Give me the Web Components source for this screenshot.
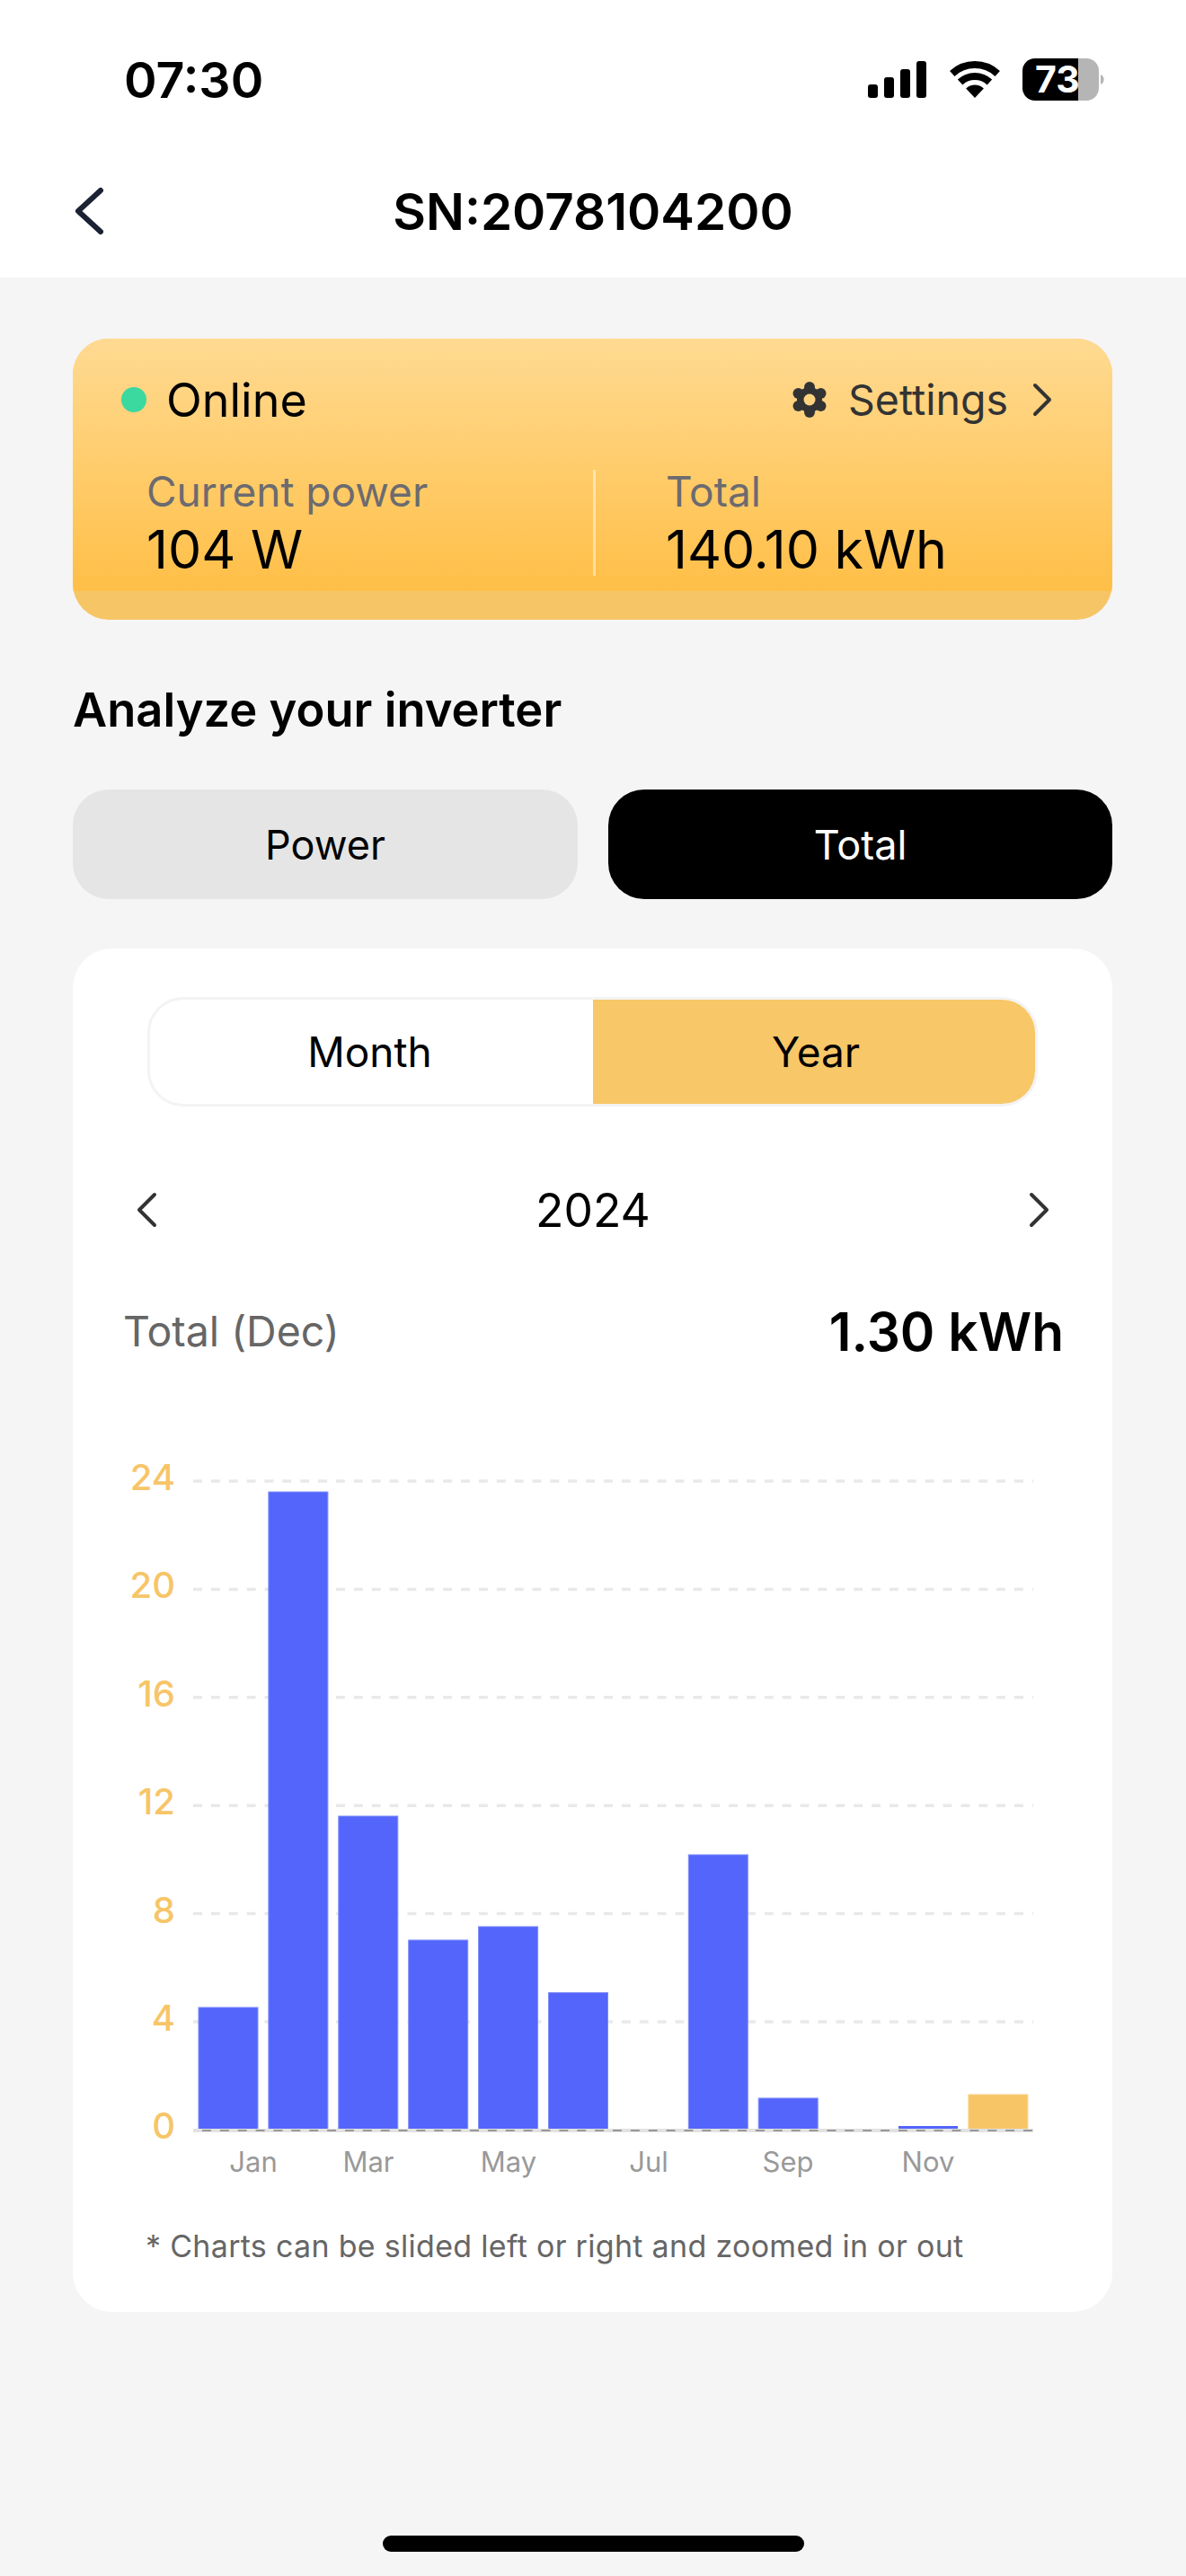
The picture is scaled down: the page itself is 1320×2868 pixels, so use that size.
<!DOCTYPE html>
<html>
<head>
<meta charset="utf-8">
<title>Inverter</title>
<style>
  html, body { margin: 0; padding: 0; background: #f5f5f5; }
  body { width: 1320px; height: 2868px; overflow: hidden; font-family: Inter, "Liberation Sans", sans-serif; color: #000; }
</style>
</head>
<body>
<inverter-page></inverter-page>

<script>
// status bar at the top of the phone
class StatusBar extends HTMLElement {
  constructor() {
    super();
    this.attachShadow({ mode: 'open' }).innerHTML = `
<style>
  :host { display: flex; align-items: center; justify-content: space-between; height: 176px; padding: 0 89px 0 138px; box-sizing: border-box; background: #fff; }
  .time { font-size: 55.5px; font-weight: 600; letter-spacing: 0; }
  .icons { display: flex; align-items: center; }
  svg { display: block; }
  .wifi { margin-left: 26px; }
  .battery { margin-left: 25px; position: relative; width: 93px; height: 47px; }
  .battery span { position: absolute; left: 14px; top: 0; line-height: 47px; font-size: 41px; font-weight: 700; color: #fff; }
</style>
<div class="time">07:30</div>
<div class="icons">
  <svg width="65" height="41" viewBox="0 0 65 41">
    <rect x="0" y="26" width="11" height="15" rx="3"/>
    <rect x="18" y="18" width="11" height="23" rx="3"/>
    <rect x="36" y="9" width="11" height="32" rx="3"/>
    <rect x="54" y="0" width="11" height="41" rx="3"/>
  </svg>
  <svg class="wifi" width="56" height="41" viewBox="0 0 56 41">
    <path d="M2.8 14A37 37 0 0 1 53.2 14M11.6 23.5A24 24 0 0 1 44.4 23.5" fill="none" stroke="#000" stroke-width="8"/>
    <path d="M28 41L18.1 30.4A14.5 14.5 0 0 1 37.9 30.4Z"/>
  </svg>
  <div class="battery">
    <svg width="93" height="47" viewBox="0 0 93 47">
      <path d="M14 0H62V47H14A14 14 0 0 1 0 33V14A14 14 0 0 1 14 0Z"/>
      <path d="M62 0H71A14 14 0 0 1 85 14V33A14 14 0 0 1 71 47H62Z" fill="#b5b5b5"/>
      <path d="M87 18A6 6 0 0 1 87 29Z" fill="#b5b5b5"/>
    </svg>
    <span>73</span>
  </div>
</div>`;
  }
}
customElements.define('status-bar', StatusBar);

class NavBar extends HTMLElement {
  constructor() {
    super();
    this.attachShadow({ mode: 'open' }).innerHTML = `
<style>
  :host { display: flex; align-items: center; justify-content: center; position: relative; height: 119px; padding-bottom: 14px; background: #fff; }
  .title { font-size: 56.5px; font-weight: 600; }
  svg { position: absolute; left: 81px; top: 31px; }
</style>
<svg width="36" height="56" viewBox="0 0 36 56"><path d="M31 5L6 28L31 51" fill="none" stroke="#1a2233" stroke-width="6" stroke-linecap="round" stroke-linejoin="round"/></svg>
<div class="title"><slot></slot></div>`;
  }
}
customElements.define('nav-bar', NavBar);

// the yellow summary card
class InverterCard extends HTMLElement {
  constructor() {
    super();
    this.attachShadow({ mode: 'open' }).innerHTML = `
<style>
  :host { display: block; margin: 68px 82px 0 81px; border-radius: 40px; overflow: hidden; background: #f6c566; padding-bottom: 32px; }
  .top { background: linear-gradient(180deg, #ffda92 0%, #ffbf47 100%); height: 281px; box-sizing: border-box; padding: 37px 66px 0 54px; }
  .head { display: flex; align-items: center; justify-content: space-between; height: 62px; }
  .state { display: flex; align-items: center; gap: 22px; font-size: 52px; }
  .dot { width: 28px; height: 28px; border-radius: 50%; background: #3bd9a0; }
  .settings { display: flex; align-items: center; font-size: 46.5px; color: #333; }
  .settings span { margin: 0 26px 0 24px; }
  .stats { display: grid; grid-template-columns: 497px 1fr; margin: 47px 0 0 28px; }
  .stat { height: 118px; display: flex; flex-direction: column; }
  .stat + .stat { border-left: 3px solid rgba(255,255,255,.45); padding-left: 78px; }
  .label { font-size: 46px; line-height: 48px; margin-bottom: 8px; color: #6b6b70; }
  .value { font-size: 59px; line-height: 66px; }
  svg { display: block; }
</style>
<div class="top">
  <div class="head">
    <div class="state"><div class="dot"></div>Online</div>
    <div class="settings">
      <svg width="38" height="40" viewBox="0 0 38 40">
        <defs><mask id="hole"><rect width="38" height="40" fill="#fff"/><circle cx="19" cy="20" r="6.5" fill="#000"/></mask></defs>
        <g fill="#333" mask="url(#hole)">
          <circle cx="19" cy="20" r="14"/>
          <circle cx="19" cy="6" r="6"/><circle cx="19" cy="34" r="6"/>
          <circle cx="6.5" cy="13" r="6"/><circle cx="31.5" cy="13" r="6"/>
          <circle cx="6.5" cy="27" r="6"/><circle cx="31.5" cy="27" r="6"/>
        </g>
      </svg>
      <span>Settings</span>
      <svg width="24" height="40" viewBox="0 0 24 40"><path d="M4 4L20 20L4 36" fill="none" stroke="#333" stroke-width="4" stroke-linecap="round" stroke-linejoin="round"/></svg>
    </div>
  </div>
  <div class="stats">
    <div class="stat"><div class="label">Current power</div><div class="value">104 W</div></div>
    <div class="stat"><div class="label">Total</div><div class="value">140.10 kWh</div></div>
  </div>
</div>`;
  }
}
customElements.define('inverter-card', InverterCard);

class AnalyzeTabs extends HTMLElement {
  constructor() {
    super();
    this.attachShadow({ mode: 'open' }).innerHTML = `
<style>
  :host { display: block; margin: 0 82px 0 81px; }
  h2 { margin: 68px 0 0; font-size: 52.5px; line-height: 64px; font-weight: 600; }
  .tabs { display: grid; grid-template-columns: 562px 561px; column-gap: 34px; margin-top: 57px; }
  .tab { height: 122px; border-radius: 40px; display: flex; align-items: center; justify-content: center; font-size: 45px; background: #e5e5e5; }
  .tab.on { background: #000; color: #fff; }
</style>
<h2>Analyze your inverter</h2>
<div class="tabs"><div class="tab">Power</div><div class="tab on">Total</div></div>`;
  }
}
customElements.define('analyze-tabs', AnalyzeTabs);

class RangeToggle extends HTMLElement {
  constructor() {
    super();
    this.attachShadow({ mode: 'open' }).innerHTML = `
<style>
  :host { display: grid; grid-template-columns: 493px 1fr; width: 991px; height: 122px; box-sizing: border-box; border: 3px solid #f3f3f3; border-radius: 40px; overflow: hidden; margin: 54px 0 0 83px; background: #fff; font-size: 46px; }
  div { display: flex; align-items: center; justify-content: center; }
  .off { padding-right: 4px; }
  .on { background: #f7c768; padding-left: 4px; }
</style>
<div class="off">Month</div><div class="on">Year</div>`;
  }
}
customElements.define('range-toggle', RangeToggle);

class YearNav extends HTMLElement {
  constructor() {
    super();
    this.attachShadow({ mode: 'open' }).innerHTML = `
<style>
  :host { display: flex; align-items: center; justify-content: space-between; height: 60px; margin: 85px 68px 0 69px; font-size: 51.5px; }
  svg { display: block; }
</style>
<svg width="26" height="40" viewBox="0 0 26 40"><path d="M22 3L5 20L22 37" fill="none" stroke="#333" stroke-width="4" stroke-linecap="round" stroke-linejoin="round"/></svg>
<div>2024</div>
<svg width="26" height="40" viewBox="0 0 26 40"><path d="M4 3L21 20L4 37" fill="none" stroke="#333" stroke-width="4" stroke-linecap="round" stroke-linejoin="round"/></svg>`;
  }
}
customElements.define('year-nav', YearNav);

// bar chart, coordinates are relative to the chart card
const BAR_TOPS = [2234, 1660, 2021, 2159, 2144, 2217.5, null, 2064, 2335, null, 2366, 2331];
const CHART_Y = 1600;
const CHART_X = 81;

class BarChart extends HTMLElement {
  constructor() {
    super();
    const base = 2371 - CHART_Y;
    const left = 215 - CHART_X;
    const right = 1150 - CHART_X;
    let grid = '', bars = '', labels = '';
    [24, 20, 16, 12, 8, 4].forEach((v, i) => {
      const y = 1648 + i * 120.4 - CHART_Y;
      grid += `<line x1="${left}" x2="${right}" y1="${y}" y2="${y}" stroke="#e9e9e9" stroke-width="3.5" stroke-dasharray="9.935 9.935"/>`;
    });
    [24, 20, 16, 12, 8, 4, 0].forEach((v, i) => {
      const y = 1648 + i * 120.4 - CHART_Y + 10;
      labels += `<text x="${195 - CHART_X}" y="${y}" text-anchor="end" class="ylab">${v}</text>`;
    });
    BAR_TOPS.forEach((top, i) => {
      if (top === null) return;
      const x = 221 + i * 77.9 - CHART_X;
      const y = top - CHART_Y;
      const c = i === 11 ? ['#f7c566', '#f9d48a'] : ['#5365fb', '#7f8dfd'];
      // the tiny Nov bar would be all edge, so no light edge there
      const edge = base - y > 10 ? c[1] : 'none';
      bars += `<rect x="${x}" y="${y}" width="66" height="${base - y}" fill="${c[0]}" stroke="${edge}" stroke-width="1"/>`;
    });
    const xlabels = [['Jan', 282], ['Mar', 410], ['May', 566], ['Jul', 722], ['Sep', 877], ['Nov', 1033]]
      .map(([t, x]) => `<text x="${x - CHART_X}" y="${2417 - CHART_Y}" text-anchor="middle" class="xlab">${t}</text>`).join('');
    this.attachShadow({ mode: 'open' }).innerHTML = `
<style>
  :host { display: block; height: 840px; }
  svg { display: block; }
  text { font-family: Inter, "Liberation Sans", sans-serif; }
  .ylab { font-size: 40px; font-weight: 500; fill: #f7c568; }
  .xlab { font-size: 31px; fill: #999; }
</style>
<svg width="1157" height="840" viewBox="0 0 1157 840">
  ${grid}${bars}
  <line x1="${left}" x2="${right}" y1="${base}" y2="${base}" stroke="#e2e2e2" stroke-width="4"/>
  <line x1="${left + 10}" x2="${right}" y1="${base}" y2="${base}" stroke="#999" stroke-width="2" stroke-dasharray="9.935 9.935"/>
  ${labels}${xlabels}
</svg>`;
  }
}
customElements.define('bar-chart', BarChart);

class ChartCard extends HTMLElement {
  constructor() {
    super();
    this.attachShadow({ mode: 'open' }).innerHTML = `
<style>
  :host { display: block; margin: 55px 82px 0 81px; height: 1518px; border-radius: 44px; background: #fff; overflow: hidden; }
  .total { display: flex; align-items: center; justify-content: space-between; height: 70px; margin: 70px 54px 0 56px; }
  .total .name { font-size: 46.5px; color: #666; }
  .total .num { font-size: 58.5px; font-weight: 600; }
  bar-chart { margin-top: 84px; }
  .note { margin: 40px 0 0 81px; font-size: 34px; letter-spacing: .3px; color: #666; line-height: 40px; }
</style>
<range-toggle></range-toggle>
<year-nav></year-nav>
<div class="total"><div class="name">Total (Dec)</div><div class="num">1.30 kWh</div></div>
<bar-chart></bar-chart>
<div class="note">* Charts can be slided left or right and zoomed in or out</div>`;
  }
}
customElements.define('chart-card', ChartCard);

class InverterPage extends HTMLElement {
  constructor() {
    super();
    this.attachShadow({ mode: 'open' }).innerHTML = `
<style>
  :host { display: block; position: relative; height: 2868px; }
  .home { position: absolute; left: 426px; top: 2823px; width: 469px; height: 18px; border-radius: 9px; background: #000; }
</style>
<status-bar></status-bar>
<nav-bar>SN:2078104200</nav-bar>
<inverter-card></inverter-card>
<analyze-tabs></analyze-tabs>
<chart-card></chart-card>
<div class="home"></div>`;
  }
}
customElements.define('inverter-page', InverterPage);
</script>
</body>
</html>
